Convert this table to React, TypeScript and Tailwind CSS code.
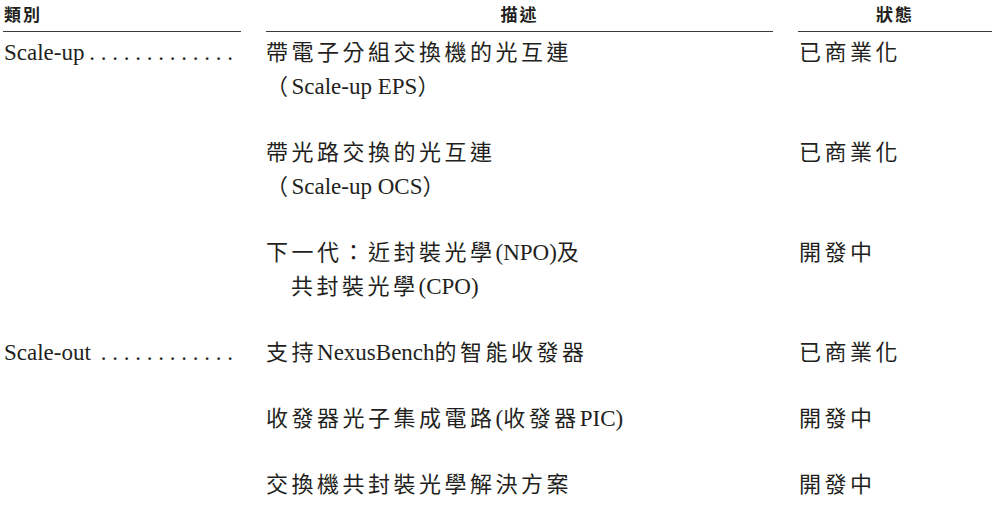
import React from "react";

const CJK = /([\u2E80-\u9FFF\u3000-\u303F\uFF01-\uFF60]+)/;

function T({ text }: { text: string }) {
  const parts = text.split(CJK).filter((p) => p.length > 0);
  return (
    <>
      {parts.map((p, i) =>
        CJK.test(p) ? (
          <span key={i} className="text-[22px] leading-[22px] tracking-[3.5px] font-['Noto_Sans_CJK_TC',sans-serif]">
            {p}
          </span>
        ) : (
          <span key={i} className="text-[23px] leading-[22px] font-['Liberation_Serif','Times_New_Roman',serif]">
            {p}
          </span>
        )
      )}
    </>
  );
}

type Row = {
  cat?: string;
  dots?: number;
  desc: { text: string; indent?: boolean }[];
  status: string;
};

const rows: Row[] = [
  {
    cat: "Scale-up",
    dots: 13,
    desc: [{ text: "帶電子分組交換機的光互連" }, { text: "（Scale-up EPS）" }],
    status: "已商業化",
  },
  {
    desc: [{ text: "帶光路交換的光互連" }, { text: "（Scale-up OCS）" }],
    status: "已商業化",
  },
  {
    desc: [{ text: "下一代：近封裝光學(NPO)及" }, { text: "共封裝光學(CPO)", indent: true }],
    status: "開發中",
  },
  {
    cat: "Scale-out",
    dots: 12,
    desc: [{ text: "支持NexusBench的智能收發器" }],
    status: "已商業化",
  },
  {
    desc: [{ text: "收發器光子集成電路(收發器PIC)" }],
    status: "開發中",
  },
  {
    desc: [{ text: "交換機共封裝光學解決方案" }],
    status: "開發中",
  },
];

export default function App() {
  const dots = (n: number) => Array.from({ length: n }, () => ".").join(" ");
  return (
    <div className="w-[1000px] h-[506px] bg-white text-[#231f20] overflow-hidden font-['Liberation_Serif','Times_New_Roman',serif]">
      <div className="grid grid-cols-[238px_507px_194px] gap-x-[25px] pl-[3px]">
        {/* Header */}
        <div className="h-[32px] border-b-[1.5px] border-[#3a3a3a] text-[17px] font-bold leading-[27px] pl-[1px] tracking-[2px] font-['Noto_Sans_CJK_TC',sans-serif]">
          類別
        </div>
        <div className="h-[32px] border-b-[1.5px] border-[#3a3a3a] text-[17px] font-bold leading-[27px] text-center tracking-[2px] font-['Noto_Sans_CJK_TC',sans-serif]">
          描述
        </div>
        <div className="h-[32px] border-b-[1.5px] border-[#3a3a3a] text-[17px] font-bold leading-[27px] text-center tracking-[2px] font-['Noto_Sans_CJK_TC',sans-serif]">
          狀態
        </div>

        {rows.map((r, i) => (
          <React.Fragment key={i}>
            <div
              className={`text-[23px] leading-[34px] flex justify-between pr-[8px] ${
                i === 0 ? "pt-[4px]" : "pt-[32px]"
              }`}
            >
              {r.cat ? (
                <>
                  <span className="pl-[1px]">{r.cat}</span>
                  <span>{dots(r.dots ?? 0)}</span>
                </>
              ) : null}
            </div>
            <div className={`text-[22px] leading-[34px] ${i === 0 ? "pt-[4px]" : "pt-[32px]"}`}>
              {r.desc.map((d, j) => (
                <div key={j} className={`h-[34px] ${d.indent ? "pl-[25px]" : ""}`}>
                  <T text={d.text} />
                </div>
              ))}
            </div>
            <div className={`text-[22px] leading-[34px] pl-[1px] ${i === 0 ? "pt-[4px]" : "pt-[32px]"}`}>
              <div className="h-[34px]">
                <T text={r.status} />
              </div>
            </div>
          </React.Fragment>
        ))}
      </div>
    </div>
  );
}
